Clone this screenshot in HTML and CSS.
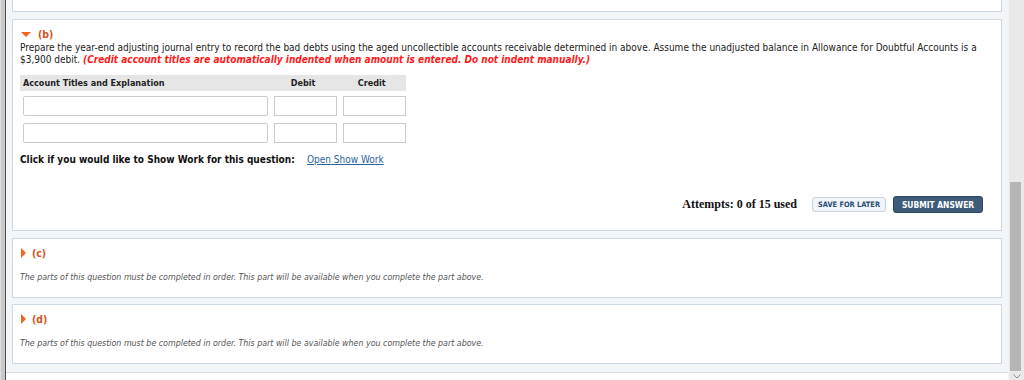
FILE: index.html
```
<!DOCTYPE html>
<html lang="en">
<head>
    <meta charset="UTF-8">
    <title>Question part (b)</title>
    <link rel="stylesheet" href="styles.css">
</head>
<body>
    <div class="frame-edge"></div>

    <div class="page">
        <div class="part part-stub"></div>

        <div class="part part-open">
            <div class="part-title"><span class="arrow-down"></span>(b)</div>
            <p class="prompt">Prepare the year-end adjusting journal entry to record the bad debts using the aged uncollectible accounts receivable determined in above. Assume the unadjusted balance in Allowance for Doubtful Accounts is a<br>
            $3,900 debit. <em class="note">(Credit account titles are automatically indented when amount is entered. Do not indent manually.)</em></p>

            <div class="journal">
                <div class="journal-head">
                    <span class="col-title">Account Titles and Explanation</span>
                    <span class="col-amount">Debit</span>
                    <span class="col-amount">Credit</span>
                </div>
                <div class="journal-row">
                    <input class="field field-title" type="text">
                    <input class="field field-amount" type="text">
                    <input class="field field-amount" type="text">
                </div>
                <div class="journal-row">
                    <input class="field field-title" type="text">
                    <input class="field field-amount" type="text">
                    <input class="field field-amount" type="text">
                </div>
            </div>

            <p class="show-work">Click if you would like to Show Work for this question: <a href="#">Open Show Work</a></p>

            <div class="actions">
                <span class="attempts">Attempts: 0 of 15 used</span>
                <button class="btn btn-save">SAVE FOR LATER</button>
                <button class="btn btn-submit">SUBMIT ANSWER</button>
            </div>
        </div>

        <div class="part part-locked">
            <div class="part-title"><span class="arrow-right"></span>(c)</div>
            <p class="locked-note">The parts of this question must be completed in order. This part will be available when you complete the part above.</p>
        </div>

        <div class="part part-locked part-last">
            <div class="part-title"><span class="arrow-right"></span>(d)</div>
            <p class="locked-note">The parts of this question must be completed in order. This part will be available when you complete the part above.</p>
        </div>
    </div>

    <div class="scrollbar">
        <div class="scroll-thumb"></div>
        <svg class="scroll-arrow" width="8" height="5" viewBox="0 0 8 5"><path d="M0.5 0.5 L4 4 L7.5 0.5" fill="none" stroke="#8a8a8a" stroke-width="1"/></svg>
    </div>
</body>
</html>
```

FILE: styles.css
```
html, body {
    margin: 0;
    height: 380px;
    overflow: hidden;
}
body {
    display: flex;
    background-color: #ffffff;
    font-family: "DejaVu Sans Condensed", "Liberation Sans", sans-serif;
    font-size: 10px;
    color: #222222;
}
.frame-edge {
    width: 6px;
    height: 380px;
    background-color: #c9c9c9;
    border-left: 1px solid #dedede;
    border-right: 1px solid #4e4e4e;
    box-sizing: border-box;
}
.page {
    flex: 1;
    height: 372px;
    padding: 0 6px;
    background-color: #f3f6f9;
    border-bottom: 1px solid #d6d9de;
    display: flex;
    flex-direction: column;
    overflow: hidden;
}
.part {
    background-color: #ffffff;
    border: 1px solid #cfd9e4;
    padding: 7px 7px 0 7px;
    flex-shrink: 0;
    box-sizing: border-box;
}
.part-stub {
    height: 12px;
    padding: 0;
    border-top: none;
}
.part-open {
    margin-top: 7px;
    height: 212px;
}
.part-locked {
    margin-top: 7px;
    height: 60px;
}
.part-last {
    margin-top: 6px;
}
.part-title {
    height: 14px;
    line-height: 14px;
    font-size: 10.4px;
    font-weight: bold;
    color: #d4521c;
    display: flex;
    align-items: center;
}
.arrow-down {
    width: 0;
    height: 0;
    border-left: 5px solid transparent;
    border-right: 5px solid transparent;
    border-top: 5px solid #ef651f;
    margin: 0 7px 0 1px;
}
.arrow-right {
    width: 0;
    height: 0;
    border-top: 5px solid transparent;
    border-bottom: 5px solid transparent;
    border-left: 5px solid #ef651f;
    margin: 0 6px 0 1px;
}
.prompt {
    margin: 1px 0 0 0;
    line-height: 12px;
    white-space: nowrap;
}
.note {
    color: #ff1a1a;
    font-weight: bold;
}
.journal {
    margin-top: 9px;
    width: 386px;
}
.journal-head {
    display: flex;
    height: 16px;
    align-items: center;
    background-color: #e6e6e6;
    font-size: 9px;
    font-weight: bold;
}
.col-title {
    width: 247px;
    padding-left: 3px;
}
.col-amount {
    width: 69px;
    text-align: center;
}
.journal-row {
    display: flex;
    margin-top: 5px;
}
.journal-row + .journal-row {
    margin-top: 7px;
}
.field {
    height: 20px;
    box-sizing: border-box;
    border: 1px solid #cccccc;
    margin: 0;
    padding: 0 3px;
    background: #ffffff;
}
.field-title {
    width: 245px;
    margin-left: 3px;
    border-radius: 2px;
}
.field-amount {
    width: 63px;
    margin-left: 6px;
}
.show-work {
    margin: 11px 0 0 0;
    line-height: 12px;
    font-weight: bold;
    color: #111111;
}
.show-work a {
    font-weight: normal;
    color: #2a63a3;
    margin-left: 9px;
}
.actions {
    display: flex;
    justify-content: flex-end;
    align-items: center;
    margin-top: 30px;
    padding-right: 11px;
}
.attempts {
    font-family: "Liberation Serif", serif;
    font-weight: bold;
    font-size: 12px;
    color: #111111;
    margin-right: 15px;
}
.btn {
    font-family: "DejaVu Sans Condensed", "Liberation Sans", sans-serif;
    font-weight: bold;
    border-radius: 3px;
    padding: 0;
    box-sizing: border-box;
}
.btn-save {
    width: 74px;
    height: 15px;
    font-size: 7.4px;
    background-color: #f1f5f9;
    border: 1px solid #c9d3df;
    color: #2c4d78;
}
.btn-submit {
    width: 90px;
    height: 17px;
    margin-left: 7px;
    font-size: 8.4px;
    background-color: #3e5b7a;
    border: 1px solid #2e4761;
    color: #ffffff;
}
.locked-note {
    margin: 11px 0 0 0;
    line-height: 12px;
    font-size: 8.8px;
    font-style: italic;
    color: #555555;
}
.scrollbar {
    width: 16px;
    height: 380px;
    background-color: #e9e9e9;
    border-left: 1px solid #f4f4f4;
    box-sizing: border-box;
    position: relative;
}
.scroll-thumb {
    position: absolute;
    left: 1px;
    right: 3px;
    top: 182px;
    height: 189px;
    background-color: #b5b5b5;
}
.scroll-arrow {
    position: absolute;
    left: 4px;
    bottom: 1px;
}
```
